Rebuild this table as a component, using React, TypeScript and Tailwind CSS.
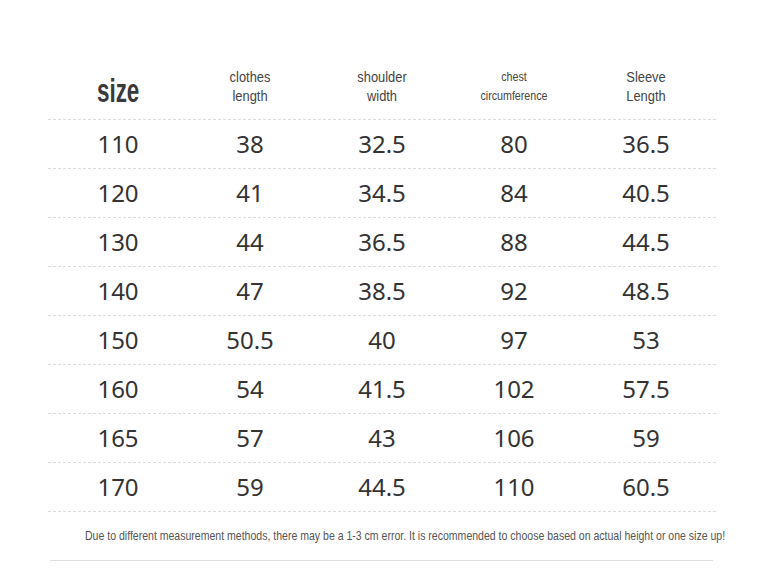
const headers = [
  ['clothes', 'length'],
  ['shoulder', 'width'],
  ['chest', 'circumference'],
  ['Sleeve', 'Length'],
]

const rows = [
  ['110', '38', '32.5', '80', '36.5'],
  ['120', '41', '34.5', '84', '40.5'],
  ['130', '44', '36.5', '88', '44.5'],
  ['140', '47', '38.5', '92', '48.5'],
  ['150', '50.5', '40', '97', '53'],
  ['160', '54', '41.5', '102', '57.5'],
  ['165', '57', '43', '106', '59'],
  ['170', '59', '44.5', '110', '60.5'],
]

const sans = { fontFamily: '"Liberation Sans", Arial, sans-serif' }

export default function App() {
  return (
    <div className="w-[764px] h-[573px] bg-white overflow-hidden">
      <div className="ml-[48px] mr-[48px] pt-[61px]">
        {/* Header */}
        <div className="flex h-[59px] items-center pl-[4px] border-b border-dashed border-[#dcdcdc]">
          <div className="w-[132px] flex justify-center">
            <span className="inline-block text-[34px] font-bold text-[#3a3a3a] leading-none scale-x-[0.66]" style={sans}>
              size
            </span>
          </div>
          {headers.map(([a, b], i) => (
            <div
              key={i}
              className={`w-[132px] mb-[6px] flex flex-col items-center text-[#444] leading-[19px] ${i === 2 ? 'text-[12px] scale-x-[0.89]' : 'text-[14px] scale-x-[0.92]'}`}
              style={sans}
            >
              <span>{a}</span>
              <span>{b}</span>
            </div>
          ))}
        </div>

        {/* Rows */}
        {rows.map((r, i) => (
          <div key={i} className="flex h-[49px] items-center pl-[4px] border-b border-dashed border-[#dcdcdc]">
            {r.map((v, j) => (
              <div
                key={j}
                className="w-[132px] text-center text-[24px] text-[#333] leading-none"
                style={{ fontFamily: '"Noto Sans", "Open Sans", sans-serif' }}
              >
                {v}
              </div>
            ))}
          </div>
        ))}

        {/* Note */}
        <div className="flex h-[49px] items-center pl-[35px] border-b border-[#dedede] mr-[3px] ml-[2px]">
          <span className="inline-block origin-left scale-x-[0.81] text-[13px] text-[#555] whitespace-nowrap" style={sans}>
            Due to different measurement methods, there may be a 1-3 cm error. It is recommended to choose based on actual height or one size up!
          </span>
        </div>
      </div>
    </div>
  )
}
